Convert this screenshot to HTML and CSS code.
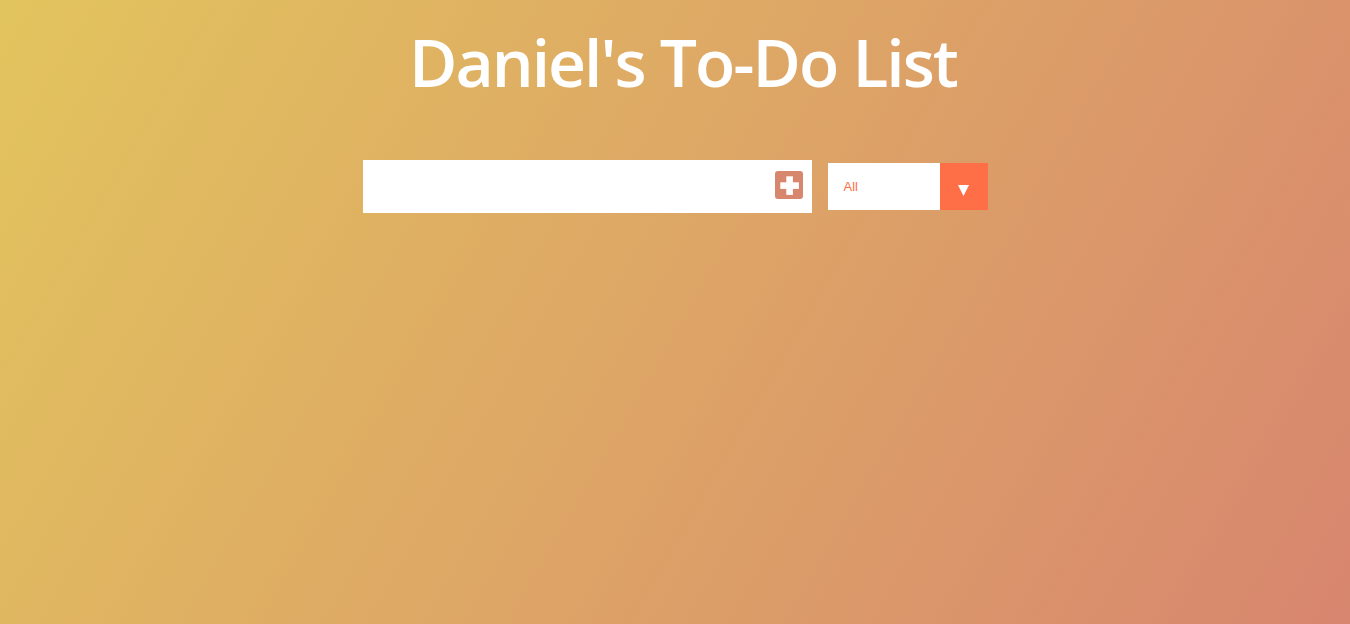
FILE: index.html
```html
<!DOCTYPE html>
<html lang="en">
<head>
<meta charset="utf-8">
<title>Daniel's To-Do List</title>
<link rel="stylesheet" href="styles.css">
</head>
<body>
  <header class="header">
    <h1 class="title">Daniel's To-Do List</h1>
  </header>
  <form class="todo-form">
    <div class="input-group">
      <input type="text" class="todo-input">
      <button type="button" class="add-btn" aria-label="Add">
        <svg width="28" height="28" viewBox="0 0 28 28">
          <rect x="0" y="0" width="28" height="28" rx="3" fill="#d8876f"/>
          <rect x="5.3" y="11.3" width="18.6" height="6.6" fill="#fff"/>
          <rect x="11.3" y="5.3" width="6.6" height="18.6" fill="#fff"/>
        </svg>
      </button>
    </div>
    <div class="select-wrap">
      <span class="select-value">All</span>
      <span class="select-arrow">
        <svg width="11" height="11" viewBox="0 0 11 11">
          <polygon points="0,0 11,0 5.5,11" fill="#fff"/>
        </svg>
      </span>
    </div>
  </form>
</body>
</html>
```
FILE: styles.css
```css
* { box-sizing: border-box; }
html, body { height: 100%; }
body {
  margin: 0;
  min-height: 624px;
  background-image: linear-gradient(120deg, #e2c45d 0%, #d8866f 100%);
  font-family: "Open Sans", sans-serif;
  color: #fff;
}
.header {
  display: flex;
  justify-content: center;
  padding-top: 15px;
  padding-left: 16px;
}
.title {
  margin: 0;
  font-size: 66px;
  font-weight: 600;
  line-height: 92px;
  letter-spacing: -2px;
}
.todo-form {
  display: flex;
  justify-content: center;
  align-items: center;
  margin-top: 53px;
  gap: 16px;
}
.input-group {
  display: flex;
  align-items: center;
  width: 449px;
  height: 53px;
  background: #fff;
}
.todo-input {
  flex: 1;
  height: 100%;
  border: none;
  outline: none;
  background: transparent;
  font-size: 20px;
  padding: 0 10px;
}
.add-btn {
  display: flex;
  border: none;
  background: #fff;
  padding: 0;
  margin-right: 9px;
  margin-bottom: 3px;
}
.select-wrap {
  display: flex;
  align-items: center;
  width: 160px;
  height: 47px;
  background: #fff;
}
.select-value {
  flex: 1;
  padding-left: 16px;
  font-family: "Liberation Sans", Arial, sans-serif;
  font-size: 13px;
  color: #ff6f47;
}
.select-arrow {
  display: flex;
  justify-content: center;
  width: 48px;
  height: 100%;
  padding-top: 22px;
  background: #ff6f47;
}
```
